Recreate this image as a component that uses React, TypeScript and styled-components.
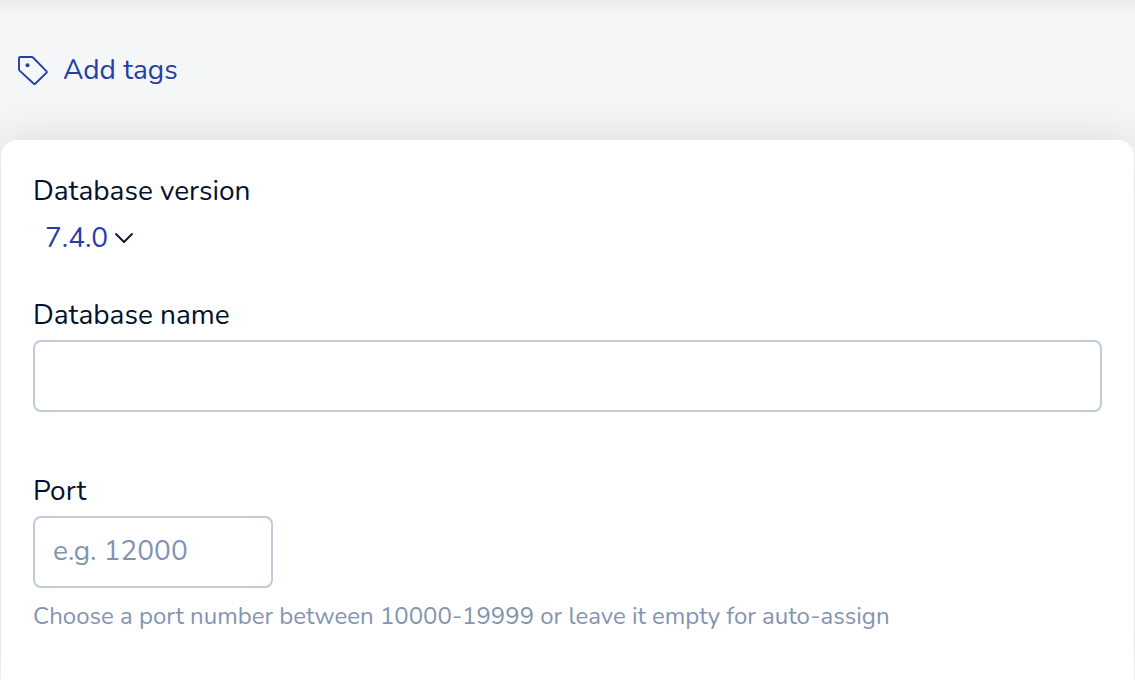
import React from "react";
import styled, { createGlobalStyle } from "styled-components";

const GlobalStyle = createGlobalStyle`
  * { box-sizing: border-box; }
  body {
    margin: 0;
    background: #f4f6f8;
    color: #03122d;
    font-family: Nunito, Lato, "Noto Sans", sans-serif;
    font-size: 28px;
    line-height: 38px;
  }
`;

const Page = styled.div`
  display: flex;
  flex-direction: column;
  min-height: 100vh;
  overflow: hidden;
`;

const TopBar = styled.header`
  display: flex;
  align-items: center;
  height: 140px;
  padding: 0 16px;
  background: linear-gradient(#e9eaec, #f0f1f3 8px, #f4f6f8 16px);
`;

const TagButton = styled.button`
  display: flex;
  align-items: center;
  gap: 13px;
  padding: 0;
  border: 0;
  background: none;
  color: #253ea8;
  font: inherit;
  cursor: pointer;
`;

const Card = styled.form`
  flex: 1;
  margin: 0 1px;
  padding: 32px 32px 48px;
  border-radius: 16px 16px 0 0;
  background: #fff;
  box-shadow: 0 0 48px rgba(0, 0, 0, 0.12);
`;

const Field = styled.div<{ $after?: number }>`
  display: flex;
  flex-direction: column;
  align-items: flex-start;
  gap: 6px;
  margin-bottom: ${({ $after = 0 }) => $after}px;
`;

const Label = styled.label`
  display: block;
`;

const SelectWrap = styled.div`
  display: flex;
  align-items: center;
  height: 44px;
  padding-left: 12px;
`;

const Select = styled.select`
  appearance: none;
  field-sizing: content;
  height: 44px;
  margin-right: -20px;
  padding: 0 26px 0 0;
  border: 0;
  background: none;
  color: #253ea8;
  font: inherit;
  cursor: pointer;
`;

const Chevron = styled.svg`
  pointer-events: none;
`;

const Input = styled.input<{ $narrow?: boolean }>`
  width: ${({ $narrow }) => ($narrow ? "240px" : "100%")};
  height: 72px;
  padding: 0 18px 2px;
  border: 2px solid #c1cad9;
  border-radius: 8px;
  background: #fff;
  color: inherit;
  font: inherit;
  &::placeholder {
    color: #8394b1;
    opacity: 1;
  }
`;

const Hint = styled.p`
  margin: 6px 0 0;
  color: #8394b1;
  font-size: 24px;
  line-height: 32px;
`;

export default function App() {
  return (
    <Page>
      <GlobalStyle />
      <TopBar>
        <TagButton type="button">
          <svg width="34" height="34" viewBox="0 0 34 34" fill="none" aria-hidden="true">
            <path
              d="M4.2 4H15.8Q16.5 4 17 4.5L30.6 18.3Q31.3 19 30.6 19.7L19.2 30.8Q18.5 31.4 17.8 30.8L3.6 17.6Q3 17 3 16.2V5.2Q3 4 4.2 4Z"
              stroke="currentColor"
              strokeWidth="1.9"
              strokeLinejoin="round"
            />
            <circle cx="11.5" cy="12.3" r="2" fill="currentColor" />
          </svg>
          Add tags
        </TagButton>
      </TopBar>
      <Card>
        <Field $after={36}>
          <Label htmlFor="version">Database version</Label>
          <SelectWrap>
            <Select id="version" defaultValue="7.4.0">
              <option>7.4.0</option>
            </Select>
            <Chevron width="20" height="12" viewBox="0 0 20 12" fill="none" aria-hidden="true">
              <path
                d="M2 2L10 10L18 2"
                stroke="#03122d"
                strokeWidth="1.8"
                strokeLinecap="round"
                strokeLinejoin="round"
              />
            </Chevron>
          </SelectWrap>
        </Field>
        <Field $after={60}>
          <Label htmlFor="name">Database name</Label>
          <Input id="name" type="text" />
        </Field>
        <Field>
          <Label htmlFor="port">Port</Label>
          <Input id="port" type="text" inputMode="numeric" placeholder="e.g. 12000" aria-describedby="port-hint" $narrow />
          <Hint id="port-hint">Choose a port number between 10000-19999 or leave it empty for auto-assign</Hint>
        </Field>
      </Card>
    </Page>
  );
}
